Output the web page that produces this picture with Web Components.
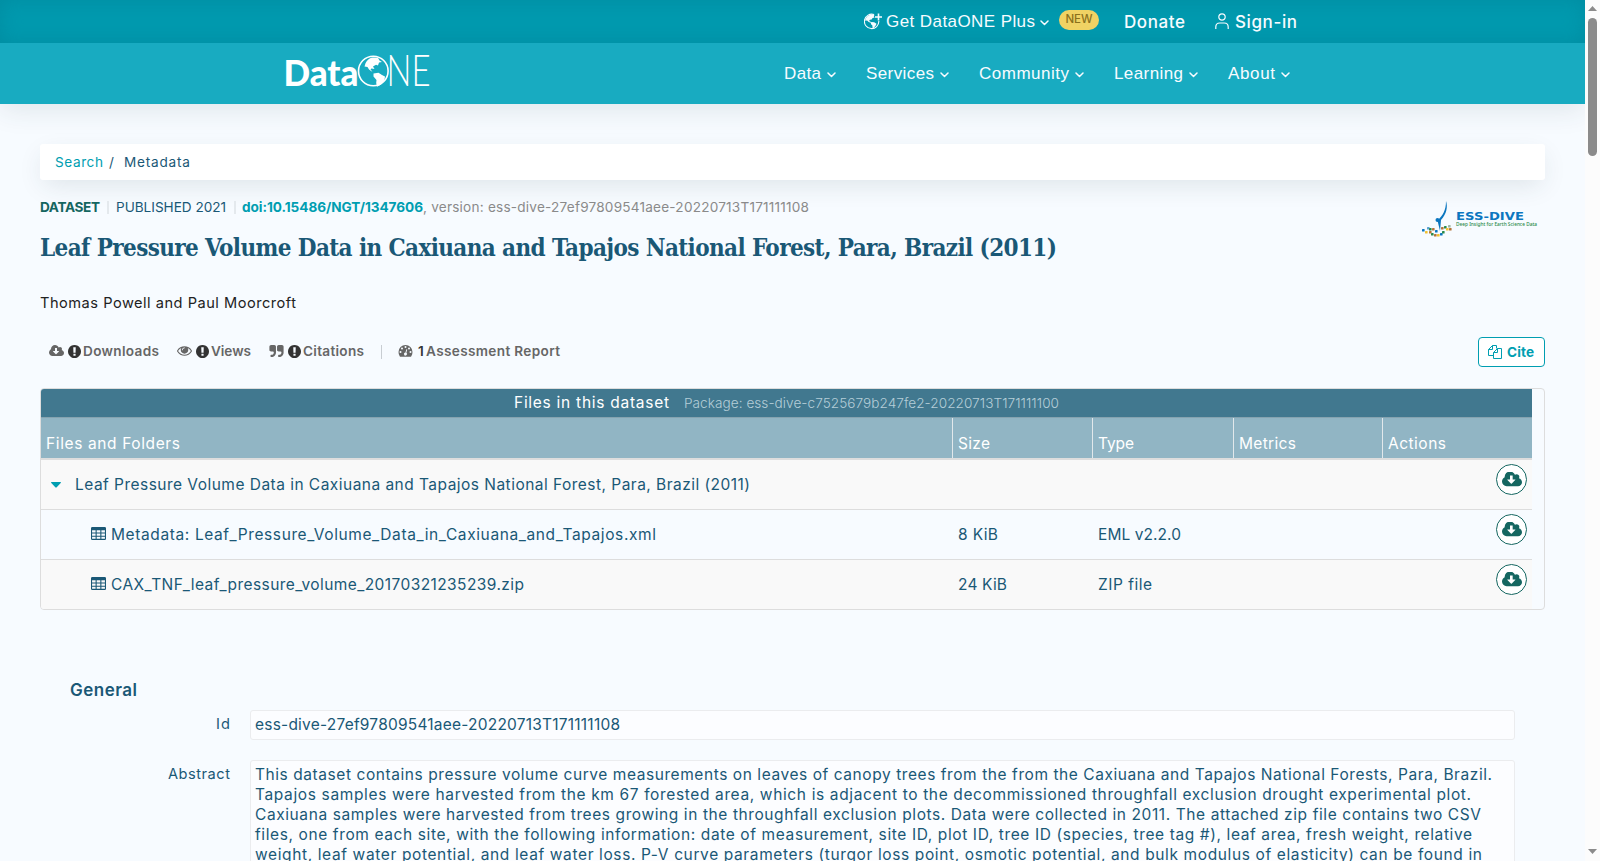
<!DOCTYPE html>
<html lang="en">
<head>
<meta charset="utf-8">
<title>Leaf Pressure Volume Data in Caxiuana and Tapajos National Forest</title>
<style>
  :root {
    --teal: #009eb1;
    --navy: #1a5876;
    --green: #146660;
    --bg: #f7fbff;
    --border: #dddddd;
  }

  body {
    margin: 0;
    height: 100vh;
    overflow: hidden;
    display: grid;
    grid-template-columns: minmax(0, 1fr) 15px;
    background: var(--bg);
    color: var(--navy);
    font-family: Inter, "Open Sans", sans-serif;
    font-size: 15.500px;
    line-height: 20px;
  }

  .page {
    height: 100vh;
    overflow: hidden;
  }

  main {
    padding: 40px;
  }
</style>
</head>
<body>
<div class="page">
  <site-header></site-header>
  <main>
    <bread-crumbs></bread-crumbs>
    <dataset-heading></dataset-heading>
    <metric-bar></metric-bar>
    <package-table></package-table>
    <metadata-section heading="General">
      <metadata-field label="Id" label-width="14"><fit-text w="365">ess-dive-27ef97809541aee-20220713T171111108</fit-text></metadata-field>
      <metadata-field label="Abstract" label-width="62">
        <fit-text w="1237">This dataset contains pressure volume curve measurements on leaves of canopy trees from the from the Caxiuana and Tapajos National Forests, Para, Brazil.</fit-text>
        <fit-text w="1216">Tapajos samples were harvested from the km 67 forested area, which is adjacent to the decommissioned throughfall exclusion drought experimental plot.</fit-text>
        <fit-text w="1226">Caxiuana samples were harvested from trees growing in the throughfall exclusion plots. Data were collected in 2011. The attached zip file contains two CSV</fit-text>
        <fit-text w="1217">files, one from each site, with the following information: date of measurement, site ID, plot ID, tree ID (species, tree tag #), leaf area, fresh weight, relative</fit-text>
        <fit-text w="1227">weight, leaf water potential, and leaf water loss. P-V curve parameters (turgor loss point, osmotic potential, and bulk modulus of elasticity) can be found in</fit-text>
      </metadata-field>
    </metadata-section>
  </main>
</div>
<page-scrollbar></page-scrollbar>

<script>
const ICONS = {
  download: ['0 200 1920 1392', '<path d="M1280 928q0-14-9-23t-23-9h-224v-352q0-13-9.5-22.5t-22.5-9.5h-192q-13 0-22.5 9.5t-9.5 22.5v352h-224q-13 0-22.5 9.5t-9.5 22.5q0 14 9 23l352 352q9 9 23 9t23-9l351-351q10-12 10-24zm640 224q0 159-112.5 271.5t-271.5 112.5h-1088q-185 0-316.5-131.5t-131.5-316.5q0-130 70-240t188-165q-2-30-2-43 0-212 150-362t362-150q156 0 285.5 87t188.5 231q71-62 166-62 106 0 181 75t75 181q0 76-41 138 130 31 213.5 135.5t83.5 238.5z"/>'],
  alert: ['128 128 1536 1536', '<path d="M896 128q209 0 385.5 103t279.5 279.5 103 385.5-103 385.5-279.5 279.5-385.5 103-385.5-103-279.5-279.5-103-385.5 103-385.5 279.5-279.5 385.5-103zm128 1247v-190q0-14-9-23.5t-22-9.5h-192q-13 0-23 10t-10 23v190q0 13 10 23t23 10h192q13 0 22-9.5t9-23.5zm-2-344l18-621q0-12-10-18-10-8-24-8h-220q-14 0-24 8-10 6-10 18l17 621q0 10 10 17.5t24 7.5h185q14 0 23.5-7.5t10.5-17.5z"/>'],
  quote: ['64 128 1664 1408', '<path d="M832 320v704q0 104-40.5 198.5t-109.5 163.5-163.5 109.5-198.5 40.5h-64q-26 0-45-19t-19-45v-128q0-26 19-45t45-19h64q106 0 181-75t75-181v-32q0-40-28-68t-68-28h-224q-80 0-136-56t-56-136v-384q0-80 56-136t136-56h384q80 0 136 56t56 136zm896 0v704q0 104-40.5 198.5t-109.5 163.5-163.5 109.5-198.5 40.5h-64q-26 0-45-19t-19-45v-128q0-26 19-45t45-19h64q106 0 181-75t75-181v-32q0-40-28-68t-68-28h-224q-80 0-136-56t-56-136v-384q0-80 56-136t136-56h384q80 0 136 56t56 136z"/>'],
  eye: ['0 384 1792 1152', '<path d="M1664 960q-152-236-381-353 61 104 61 225 0 185-131.5 316.5t-316.5 131.5-316.5-131.5-131.5-316.5q0-121 61-225-229 117-381 353 133 205 333.5 326.5t434.5 121.5 434.5-121.5 333.5-326.5zm-720-384q0-20-14-34t-34-14q-125 0-214.5 89.5t-89.5 214.5q0 20 14 34t34 14 34-14 14-34q0-86 61-147t147-61q20 0 34-14t14-34zm848 384q0 34-20 69-140 230-376.5 368.5t-499.5 138.5-499.5-139-376.5-368q-20-35-20-69t20-69q140-229 376.5-368t499.5-139 499.5 139 376.5 368q20 35 20 69z"/>'],
  gauge: ['0 0 14 12', '<path fill-rule="evenodd" d="M7 0a7 7 0 0 1 7 7c0 1.600-.4 3-1.200 4.300-.2.400-.5.500-.9.500H2.100c-.4 0-.7-.1-.9-.5A8 8 0 0 1 0 7a7 7 0 0 1 7-7zM2 6a1 1 0 1 0 0 2 1 1 0 0 0 0-2zm1.500-3.500a1 1 0 1 0 0 2 1 1 0 0 0 0-2zM7 1a1 1 0 1 0 0 2 1 1 0 0 0 0-2zm3.500 1.500a1 1 0 1 0 0 2 1 1 0 0 0 0-2zM12 6a1 1 0 1 0 0 2 1 1 0 0 0 0-2zM7.800 4.200 7 7.500a1.500 1.500 0 1 0 .9.300l.8-3.300z"/>'],
  copy: ['0 0 14 14', '<path fill="none" stroke="currentColor" d="M5.500 10.500h-5v-6l4-4h4v3M4.500.5v4h-4M5.500 13.500v-6l4-4h4v10zM9.500 3.500v4h-4"/>'],
  table: ['0 0 14 12', '<path fill-rule="evenodd" d="M1.200 0h11.600Q14 0 14 1.200v9.600q0 1.200-1.200 1.200H1.200Q0 12 0 10.800V1.200Q0 0 1.200 0zM1 3v2h3.300V3zm4.300 0v2h3.400V3zm4.400 0v2H13V3zM1 6v2h3.300V6zm4.300 0v2h3.400V6zm4.400 0v2H13V6zM1 9v2h3.300V9zm4.300 0v2h3.400V9zm4.400 0v2H13V9z"/>'],
  caret: ['0 0 10 6', '<path d="M.5 0h9q.8.300.2 1L5.500 5.400q-.5.400-1 0L.3 1Q-.3.300.5 0z"/>'],
  chevron: ['0 0 9 6', '<path fill="none" stroke="currentColor" stroke-width="1.500" stroke-linecap="round" stroke-linejoin="round" d="M1 1l3.500 3.500L8 1"/>'],
  person: ['0 0 14 16', '<g fill="none" stroke="currentColor" stroke-width="1.200"><circle cx="7" cy="4" r="3.200"/><path d="M.8 16v-2q0-4 4-4h4.400q4 0 4 4v2"/></g>'],
  globePlus: ['0 0 18 17', '<path fill="none" stroke="currentColor" stroke-width="1.100" d="M10 1.600A7.200 7.200 0 1 0 14.800 8"/><path d="M1.200 7.800C1.400 4.500 4 2 7.500 1.500l3 .3-.7 1.700.8 1-2 .6-1 1.500-1.700.2-.8 1.300 1.600.7.5 1.200-2.500-1-1.600-1.600zM7.200 9l3 .2 2.300 1.500-.8 1.800-2 2.600-1.200-.3-.1-2.300-1.600-1.500z"/><path fill="none" stroke="currentColor" stroke-width="1.600" d="M14.500.5v7M11 4h7"/>']
};

/* Single line of text tracked out to a given width */
class FitText extends HTMLElement {
  constructor() {
    super();
    this.attachShadow({ mode: 'open' });
    this.shadowRoot.innerHTML = `
      <style>
        :host { display: block; white-space: nowrap; }
        span { display: inline-block; }
      </style>
      <span><slot></slot></span>
    `;
  }

  connectedCallback() {
    const width = Number(this.getAttribute('w'));
    const inner = this.shadowRoot.querySelector('span');
    const count = this.textContent.length;
    inner.style.letterSpacing = '0px';
    const natural = inner.getBoundingClientRect().width;
    inner.style.letterSpacing = `${(width - natural) / Math.max(count - 1, 1)}px`;
    this.style.width = `${width}px`;
  }
}

class UiIcon extends HTMLElement {
  constructor() {
    super();
    this.attachShadow({ mode: 'open' });
  }

  connectedCallback() {
    const [viewBox, body] = ICONS[this.getAttribute('name')];
    this.shadowRoot.innerHTML = `
      <style>
        :host { display: block; flex: none; width: 14px; height: 12px; }
        svg { display: block; width: 100%; height: 100%; fill: currentColor; }
      </style>
      <svg viewBox="${viewBox}">${body}</svg>
    `;
  }
}

class SiteLogo extends HTMLElement {
  constructor() {
    super();
    this.attachShadow({ mode: 'open' });
    this.shadowRoot.innerHTML = `
      <style>
        :host { display: block; width: 146px; height: 36px; color: #ffffff; }
        svg { display: block; overflow: visible; }
      </style>
      <svg width="146" height="36" viewBox="0 0 146 36" fill="currentColor">
        <circle cx="88.300" cy="18" r="14.800" fill="none" stroke="currentColor" stroke-width="1.600"/>
        <path d="M80 12c1-4 4-7 8-7.500l5 .2 1.500 2.800 2.500 1.500-3 .5-1 3-2-.8-3 1.800 1.500 2.500-3-.5-1 .8 2 2.700-3.500-2.500-1.500-2.500-3-.5zM88.500 20.500l5-.8 3.500 2.300 3 1.500-.5 3.500-3.500 4.500-4 2.300-.8-3.800.3-3-3-3.500z"/>
        <text x="-1.500" y="32.700" font-family="Lato" font-weight="900" font-size="36.500" textLength="75" lengthAdjust="spacingAndGlyphs">Data</text>
        <text x="101.500" y="32.500" font-family="Lato" font-weight="300" font-size="43.500" textLength="44" lengthAdjust="spacingAndGlyphs">NE</text>
      </svg>
    `;
  }
}

class SiteHeader extends HTMLElement {
  constructor() {
    super();
    this.attachShadow({ mode: 'open' });
  }

  connectedCallback() {
    this.render();
  }

  render() {
    const items = [['Data', 37, 30], ['Services', 68, 30], ['Community', 90, 30], ['Learning', 69, 30], ['About', 47, 0]];
    const nav = items
      .map(([label, w, gap]) => `<a style="margin-right:${gap}px"><fit-text w="${w}">${label}</fit-text><ui-icon name="chevron"></ui-icon></a>`)
      .join('');

    this.shadowRoot.innerHTML = `
      <style>
        :host {
          display: block;
          position: relative;
          color: #f7fbff;
          font-size: 17px;
          box-shadow: 0 6px 26px rgba(40, 60, 70, 0.11);
        }
        .top {
          display: flex;
          align-items: center;
          justify-content: flex-end;
          box-sizing: border-box;
          height: 43px;
          padding-right: 288px;
          background: #009aaf;
          box-shadow: inset 0 0 20px rgba(0, 110, 130, 0.3);
        }
        .plus, .bar nav { font-family: "Liberation Sans", Arial, sans-serif; }
        .plus, .sign, .bar, nav, a { display: flex; align-items: center; }
        .plus ui-icon:first-child { width: 18px; height: 17px; margin-right: 4px; }
        ui-icon[name="chevron"] { width: 9px; height: 6px; margin: 3px 0 0 6px; }
        .badge {
          margin: -3px 25px 0 10px;
          width: 40px;
          height: 20px;
          display: flex;
          justify-content: center;
          border-radius: 10px;
          background: #f0d264;
          color: #8a701c;
          font-size: 11.500px;
          line-height: 19px;
          font-weight: 500;
        }
        .donate, .sign { font-weight: 500; padding-top: 1px; }
        .sign { margin-left: 30px; }
        .sign ui-icon { width: 14px; height: 16px; margin: -3px 6px 0 0; }
        .bar {
          justify-content: space-between;
          box-sizing: border-box;
          height: 61px;
          padding: 0 295px 0 285px;
          background: #18abc1;
        }
        site-logo { margin-top: -5px; }
      </style>
      <div class="top">
        <div class="plus"><ui-icon name="globePlus"></ui-icon><fit-text w="149">Get DataONE Plus</fit-text><ui-icon name="chevron" style="margin-left:5px"></ui-icon></div>
        <span class="badge"><fit-text w="27">NEW</fit-text></span>
        <fit-text class="donate" w="61">Donate</fit-text>
        <div class="sign"><ui-icon name="person"></ui-icon><fit-text w="62">Sign-in</fit-text></div>
      </div>
      <div class="bar">
        <site-logo></site-logo>
        <nav>${nav}</nav>
      </div>
    `;
  }
}

class BreadCrumbs extends HTMLElement {
  constructor() {
    super();
    this.attachShadow({ mode: 'open' });
    this.shadowRoot.innerHTML = `
      <style>
        :host {
          display: flex;
          align-items: center;
          box-sizing: border-box;
          height: 36px;
          padding: 0 15px;
          border-radius: 3px;
          background: #ffffff;
          box-shadow: 0 8px 26px -4px rgba(40, 60, 70, 0.13);
          font-size: 13.600px;
        }
        a { color: var(--teal); }
        .sep { margin: 0 10px 0 6px; }
      </style>
      <a><fit-text w="48">Search</fit-text></a>
      <span class="sep">/</span>
      <fit-text w="66">Metadata</fit-text>
    `;
  }
}

class EssDiveLogo extends HTMLElement {
  constructor() {
    super();
    this.attachShadow({ mode: 'open' });
    const dots = [
      [0, 28, '#0b76bf'], [3, 30, '#f2c230'], [5, 26, '#5aa2d0'], [7, 27, '#2a8a4a'], [7, 30, '#b5743a'],
      [10, 27, '#b5743a'], [9, 32, '#2a8a4a'], [12, 33, '#b5743a'], [13, 29, '#0b76bf'], [15, 33, '#f2c230'],
      [18, 32, '#0b76bf'], [20, 30, '#2a8a4a'], [19, 26, '#b5743a'], [22, 25, '#2a8a4a'], [24, 27, '#f2c230'],
      [26, 24, '#9db8a0'], [27, 27, '#b5743a']
    ].map(([x, y, c]) => `<rect x="${x}" y="${y}" width="2.600" height="2.600" rx=".6" fill="${c}"/>`).join('');

    this.shadowRoot.innerHTML = `
      <style>
        :host { display: block; width: 116px; height: 38px; }
        svg { display: block; }
      </style>
      <svg width="116" height="38" viewBox="0 0 116 38">
        ${dots}
        <circle cx="15.500" cy="19" r="2" fill="#0b76bf"/>
        <path fill="#0b76bf" d="M24 0c2 6 .5 13-5 19l-1 11-2.500-10.500C21 14.500 24 9 24 0z"/>
        <text x="34" y="19.300" font-family="DejaVu Sans" font-weight="700" font-size="10" textLength="68" lengthAdjust="spacingAndGlyphs" fill="#0b76bf">ESS-DIVE</text>
        <text x="34" y="24.600" font-family="Noto Sans" font-weight="500" font-size="5" textLength="81" lengthAdjust="spacingAndGlyphs" fill="#2a8a4a">Deep Insight for Earth Science Data</text>
      </svg>
    `;
  }
}

class DatasetHeading extends HTMLElement {
  constructor() {
    super();
    this.attachShadow({ mode: 'open' });
    this.shadowRoot.innerHTML = `
      <style>
        :host { display: flex; justify-content: space-between; height: 157px; }
        .meta { display: flex; margin-top: 17px; font-size: 13.600px; }
        .type { color: var(--green); font-weight: 700; }
        .bar { width: 2px; height: 13px; margin: 4px 7px 0 8px; background: #e4e9ed; }
        .doi { color: var(--teal); font-weight: 700; }
        .version { color: #8a8a8a; }
        h1 {
          margin: 12px 0 0;
          font: bold 24px/38px "DejaVu Serif Condensed", "DejaVu Serif", serif;
          font-stretch: condensed;
        }
        .authors { margin-top: 26px; color: #222222; font-size: 14.600px; }
        ess-dive-logo { margin: 21px 7px 0 0; }
      </style>
      <div>
        <div class="meta">
          <fit-text class="type" w="60">DATASET</fit-text>
          <span class="bar" style="margin-left:7px"></span>
          <fit-text w="110">PUBLISHED 2021</fit-text>
          <span class="bar" style="margin-right:6px"></span>
          <fit-text class="doi" w="181">doi:10.15486/NGT/1347606</fit-text>
          <fit-text class="version" w="386">, version: ess-dive-27ef97809541aee-20220713T171111108</fit-text>
        </div>
        <h1><fit-text w="1017">Leaf Pressure Volume Data in Caxiuana and Tapajos National Forest, Para, Brazil (2011)</fit-text></h1>
        <fit-text class="authors" w="256">Thomas Powell and Paul Moorcroft</fit-text>
      </div>
      <ess-dive-logo></ess-dive-logo>
    `;
  }
}

class MetricBar extends HTMLElement {
  constructor() {
    super();
    this.attachShadow({ mode: 'open' });
    const metric = (icon, label, w, gap) => `
      <span class="metric" style="margin-right:${gap}px">
        <ui-icon name="${icon}"></ui-icon>
        <ui-icon class="alert" name="alert"></ui-icon>
        <fit-text w="${w}">${label}</fit-text>
      </span>`;

    this.shadowRoot.innerHTML = `
      <style>
        :host {
          display: flex;
          align-items: center;
          height: 30px;
          padding-left: 9px;
          color: #666666;
          font-size: 13.600px;
          font-weight: 600;
        }
        .metric { display: flex; align-items: center; margin-top: -2px; }
        .metric ui-icon { width: 15px; height: 12px; }
        .metric .alert { width: 13px; height: 13px; margin: 0 2px 0 4px; color: #333333; }
        .rule { width: 1px; height: 14px; margin-right: 16px; background: #c8cdd2; }
        .count { margin: 0 2px 0 5px; color: #333333; }
        button {
          display: flex;
          align-items: center;
          box-sizing: border-box;
          width: 67px;
          height: 30px;
          margin-left: auto;
          padding: 0 9px;
          border: 1px solid var(--teal);
          border-radius: 4px;
          background: #ffffff;
          color: var(--teal);
          font: inherit;
          font-weight: 700;
        }
        button ui-icon { width: 14px; height: 14px; margin: -1px 5px 0 0; }
      </style>
      ${metric('download', 'Downloads', 76, 18)}
      ${metric('eye', 'Views', 40, 18)}
      ${metric('quote', 'Citations', 61, 17)}
      <span class="rule"></span>
      <span class="metric">
        <ui-icon name="gauge"></ui-icon>
        <fit-text class="count" w="6">1</fit-text>
        <fit-text w="134">Assessment Report</fit-text>
      </span>
      <button><ui-icon name="copy"></ui-icon><fit-text w="27">Cite</fit-text></button>
    `;
  }
}

class DownloadButton extends HTMLElement {
  constructor() {
    super();
    this.attachShadow({ mode: 'open' });
    this.shadowRoot.innerHTML = `
      <style>
        :host {
          display: flex;
          align-items: center;
          justify-content: center;
          box-sizing: border-box;
          width: 31px;
          height: 31px;
          border: 1px solid var(--green);
          border-radius: 50%;
          background: #ffffff;
          color: var(--green);
        }
        ui-icon { width: 20px; height: 15px; margin-top: -1px; }
      </style>
      <ui-icon name="download"></ui-icon>
    `;
  }
}

class PackageTable extends HTMLElement {
  constructor() {
    super();
    this.attachShadow({ mode: 'open' });
  }

  connectedCallback() {
    this.render();
  }

  render() {
    const files = [
      ['Metadata: Leaf_Pressure_Volume_Data_in_Caxiuana_and_Tapajos.xml', 545, '8 KiB', 40, 'EML v2.2.0', 83],
      ['CAX_TNF_leaf_pressure_volume_20170321235239.zip', 413, '24 KiB', 49, 'ZIP file', 54]
    ];
    const rows = files.map(([name, nameW, size, sizeW, type, typeW]) => `
      <div class="row file">
        <div class="name"><ui-icon name="table"></ui-icon><fit-text w="${nameW}">${name}</fit-text></div>
        <div><fit-text w="${sizeW}">${size}</fit-text></div>
        <div><fit-text w="${typeW}">${type}</fit-text></div>
        <div></div>
        <div class="action"><download-button></download-button></div>
      </div>`).join('');

    this.shadowRoot.innerHTML = `
      <style>
        :host {
          display: block;
          box-sizing: border-box;
          height: 222px;
          margin-top: 21px;
          padding-right: 12px;
          border: 1px solid var(--border);
          border-radius: 4px;
          overflow: hidden;
        }
        .caption {
          display: flex;
          align-items: center;
          justify-content: center;
          gap: 15px;
          height: 28px;
          border-bottom: 1px solid #85a3b0;
          background: #41788f;
          color: #ffffff;
        }
        .caption small { color: #b5ced8; font-size: 13.600px; font-weight: 300; }
        .row {
          display: grid;
          grid-template-columns: 911px 140px 141px 149px 150px;
          height: 49px;
          border-bottom: 1px solid var(--border);
        }
        .row:last-child { border-bottom: 0; }
        .row > div { display: flex; align-items: center; padding: 1px 5px 0 6px; }
        .row > div:first-child { padding-left: 5px; }
        .head { height: 40px; border-bottom: 2px solid var(--border); background: #91b5c4; color: #ffffff; }
        .head > div { align-items: flex-end; padding: 0 5px; }
        .head > div + div { border-left: 1px solid #e2e8eb; padding: 0 5px; }
        .head fit-text { margin-bottom: 4px; }
        .odd, .file:last-child { background: #f9f9f9; }
        .name ui-icon { width: 15px; height: 13px; margin: -3px 5px 0 45px; }
        .odd ui-icon { width: 10px; height: 6px; margin: -1px 14px 0 5px; color: var(--teal); }
        .row > .action { justify-content: flex-end; align-items: flex-start; padding: 4px 5px 0; }
      </style>
      <div class="caption">
        <fit-text w="155">Files in this dataset</fit-text>
        <small><fit-text w="375">Package: ess-dive-c7525679b247fe2-20220713T171111100</fit-text></small>
      </div>
      <div class="row head">
        <div><fit-text w="134">Files and Folders</fit-text></div>
        <div><fit-text w="32">Size</fit-text></div>
        <div><fit-text w="36">Type</fit-text></div>
        <div><fit-text w="57">Metrics</fit-text></div>
        <div><fit-text w="58">Actions</fit-text></div>
      </div>
      <div class="row odd">
        <div><ui-icon name="caret"></ui-icon><fit-text w="675">Leaf Pressure Volume Data in Caxiuana and Tapajos National Forest, Para, Brazil (2011)</fit-text></div>
        <div></div><div></div><div></div>
        <div class="action"><download-button></download-button></div>
      </div>
      ${rows}
    `;
  }
}

class MetadataSection extends HTMLElement {
  constructor() {
    super();
    this.attachShadow({ mode: 'open' });
  }

  connectedCallback() {
    this.shadowRoot.innerHTML = `
      <style>
        :host { display: block; padding: 70px 30px 0; }
        h4 { margin: 0 0 10px; font-size: 17px; line-height: 20px; font-weight: 600; }
        .fields { display: flex; flex-direction: column; gap: 20px; }
      </style>
      <h4><fit-text w="67">${this.getAttribute('heading')}</fit-text></h4>
      <div class="fields"><slot></slot></div>
    `;
  }
}

class MetadataField extends HTMLElement {
  constructor() {
    super();
    this.attachShadow({ mode: 'open' });
  }

  connectedCallback() {
    this.shadowRoot.innerHTML = `
      <style>
        :host { display: grid; grid-template-columns: 160px minmax(0, 1fr); column-gap: 20px; }
        .label { display: flex; justify-content: flex-end; padding-top: 4px; font-size: 14.600px; }
        .value {
          padding: 4px;
          border: 1px solid #ebecee;
          border-radius: 3px;
          background: #fcfdff;
        }
      </style>
      <div class="label"><fit-text w="${this.getAttribute('label-width')}">${this.getAttribute('label')}</fit-text></div>
      <div class="value"><slot></slot></div>
    `;
  }
}

class PageScrollbar extends HTMLElement {
  constructor() {
    super();
    this.attachShadow({ mode: 'open' });
    this.shadowRoot.innerHTML = `
      <style>
        :host {
          display: flex;
          flex-direction: column;
          align-items: center;
          box-sizing: border-box;
          height: 100vh;
          padding: 6px 0 7px;
          background: #fcfcfc;
        }
        svg { display: block; fill: #8b8b8b; }
        .thumb { width: 9px; height: 138px; margin-top: 7px; border-radius: 5px; background: #8b8b8b; }
        .down { margin-top: auto; }
      </style>
      <svg width="9" height="5" viewBox="0 0 9 5"><path d="M0 5 4.500 0 9 5z"/></svg>
      <div class="thumb"></div>
      <svg class="down" width="9" height="5" viewBox="0 0 9 5"><path d="M0 0 4.500 5 9 0z"/></svg>
    `;
  }
}

customElements.define('page-scrollbar', PageScrollbar);
customElements.define('site-logo', SiteLogo);
customElements.define('ess-dive-logo', EssDiveLogo);
customElements.define('download-button', DownloadButton);
customElements.define('site-header', SiteHeader);
customElements.define('bread-crumbs', BreadCrumbs);
customElements.define('dataset-heading', DatasetHeading);
customElements.define('metric-bar', MetricBar);
customElements.define('package-table', PackageTable);
customElements.define('metadata-section', MetadataSection);
customElements.define('metadata-field', MetadataField);
customElements.define('ui-icon', UiIcon);
// fit-text measures itself, so everything around it has to be rendered first
customElements.define('fit-text', FitText);
</script>
</body>
</html>
